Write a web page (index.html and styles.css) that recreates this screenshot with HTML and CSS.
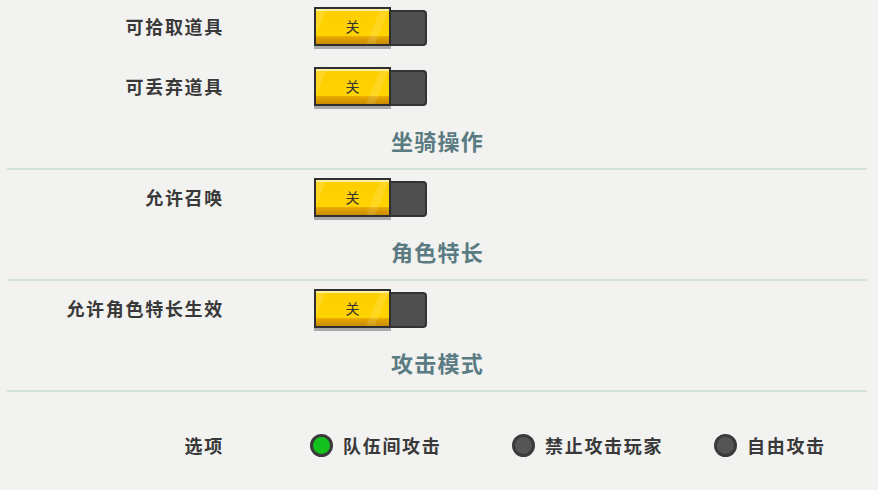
FILE: index.html
```html
<!DOCTYPE html>
<html lang="zh">
<head>
<meta charset="utf-8">
<link rel="stylesheet" href="styles.css">
</head>
<body>
<div class="page">
  <div class="row">
    <div class="label">可拾取道具</div>
    <div class="toggle"><div class="knob">关</div><div class="track"></div></div>
  </div>
  <div class="row">
    <div class="label">可丢弃道具</div>
    <div class="toggle"><div class="knob">关</div><div class="track"></div></div>
  </div>
  <div class="title">坐骑操作</div>
  <div class="divider"></div>
  <div class="row">
    <div class="label">允许召唤</div>
    <div class="toggle"><div class="knob">关</div><div class="track"></div></div>
  </div>
  <div class="title">角色特长</div>
  <div class="divider"></div>
  <div class="row">
    <div class="label">允许角色特长生效</div>
    <div class="toggle"><div class="knob">关</div><div class="track"></div></div>
  </div>
  <div class="title">攻击模式</div>
  <div class="divider"></div>
  <div class="options">
    <div class="label">选项</div>
    <div class="radios">
      <div class="radio"><span class="dot on"></span><span>队伍间攻击</span></div>
      <div class="radio"><span class="dot"></span><span>禁止攻击玩家</span></div>
      <div class="radio"><span class="dot"></span><span>自由攻击</span></div>
    </div>
  </div>
</div>
</body>
</html>
```

FILE: styles.css
```css
html, body {
  margin: 0;
  padding: 0;
  background: #f2f2f0;
}
body {
  width: 878px;
  height: 490px;
  overflow: hidden;
  font-family: "Noto Sans CJK SC", "Noto Sans", sans-serif;
}
.page {
  padding: 7px 11px 0 7px;
}
.row {
  display: flex;
  align-items: flex-start;
  height: 42px;
  margin-bottom: 18px;
}
.label {
  width: 217px;
  flex: none;
  text-align: right;
  font-size: 18px;
  font-weight: bold;
  letter-spacing: 1.7px;
  color: #393939;
  line-height: 38px;
}
.toggle {
  margin-left: 90px;
  display: flex;
  align-items: flex-start;
}
.knob {
  width: 77px;
  height: 39px;
  box-sizing: border-box;
  border: 2px solid #2f2f2f;
  box-shadow: 0 3px 0 #a9a9a9, inset 0 2px 0 #fff0a0;
  background:
    linear-gradient(112deg, rgba(255,255,255,0.14) 0 12%, transparent 12% 74%, rgba(255,255,255,0.12) 74% 84%, transparent 84%),
    linear-gradient(to bottom, #ffce00 0, #ffd300 76%, #e8a800 79%, #c98c00 100%);
  text-align: center;
  font-size: 14px;
  line-height: 34px;
  color: #333;
  font-weight: normal;
}
.track {
  width: 36px;
  height: 36px;
  margin-top: 3px;
  box-sizing: border-box;
  background: #4f4f4f;
  border: 2px solid #333;
  border-left: none;
  border-radius: 0 4px 4px 0;
}
.title {
  height: 30px;
  line-height: 26px;
  text-align: center;
  font-size: 22px;
  font-weight: bold;
  letter-spacing: 1.2px;
  color: #5a7b82;
  margin-bottom: 11px;
  padding-left: 1px;
}
.divider {
  height: 2px;
  background: #d3e2d6;
  margin-bottom: 8px;
}
.options {
  display: flex;
  align-items: center;
  margin-top: 36px;
  height: 34px;
}
.options .label {
  line-height: 32px;
}
.radios {
  display: flex;
  margin-left: 86px;
}
.radio {
  width: 202px;
  display: flex;
  align-items: center;
  font-size: 18px;
  font-weight: bold;
  letter-spacing: 1.7px;
  color: #393939;
  line-height: 32px;
}
.dot {
  width: 23px;
  height: 23px;
  box-sizing: border-box;
  border-radius: 50%;
  border: 3px solid #3a3a3a;
  background: #555;
  margin-right: 10px;
  flex: none;
}
.dot.on {
  background: #14c21e;
}
```
